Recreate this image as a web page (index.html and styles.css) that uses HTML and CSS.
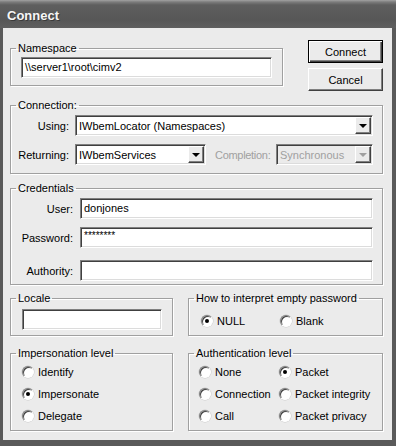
FILE: index.html
```html
<!DOCTYPE html>
<html lang="en">
<head>
    <meta charset="UTF-8">
    <meta name="viewport" content="width=device-width, initial-scale=1.0">
    <title>Connect</title>
    <link rel="stylesheet" href="styles.css">
</head>
<body>
    <div class="window">
        <div class="titlebar">Connect</div>
        <div class="client">
            <div class="top-row">
                <fieldset class="group namespace">
                    <legend>Namespace</legend>
                    <div class="group-body">
                        <div class="textbox">\\server1\root\cimv2</div>
                    </div>
                </fieldset>
                <div class="buttons">
                    <button class="btn btn-default">Connect</button>
                    <button class="btn">Cancel</button>
                </div>
            </div>

            <fieldset class="group connection">
                <legend>Connection:</legend>
                <div class="group-body">
                    <div class="field-row">
                        <span class="field-label">Using:</span>
                        <div class="combo combo-fill">
                            <span class="combo-text">IWbemLocator (Namespaces)</span>
                            <span class="combo-arrow"></span>
                        </div>
                    </div>
                    <div class="field-row">
                        <span class="field-label">Returning:</span>
                        <div class="combo combo-returning">
                            <span class="combo-text">IWbemServices</span>
                            <span class="combo-arrow"></span>
                        </div>
                        <span class="completion-label">Completion:</span>
                        <div class="combo combo-disabled">
                            <span class="combo-text">Synchronous</span>
                            <span class="combo-arrow"></span>
                        </div>
                    </div>
                </div>
            </fieldset>

            <fieldset class="group credentials">
                <legend>Credentials</legend>
                <div class="group-body">
                    <div class="field-row">
                        <span class="field-label">User:</span>
                        <div class="textbox">donjones</div>
                    </div>
                    <div class="field-row">
                        <span class="field-label">Password:</span>
                        <div class="textbox"><span class="masked">********</span></div>
                    </div>
                    <div class="field-row authority">
                        <span class="field-label">Authority:</span>
                        <div class="textbox"></div>
                    </div>
                </div>
            </fieldset>

            <div class="pair-row">
                <fieldset class="group locale">
                    <legend>Locale</legend>
                    <div class="group-body">
                        <div class="textbox"></div>
                    </div>
                </fieldset>
                <fieldset class="group empty-pw">
                    <legend>How to interpret empty password</legend>
                    <div class="group-body options">
                        <div class="option"><span class="radio checked"></span>NULL</div>
                        <div class="option"><span class="radio"></span>Blank</div>
                    </div>
                </fieldset>
            </div>

            <div class="pair-row lower">
                <fieldset class="group impersonation">
                    <legend>Impersonation level</legend>
                    <div class="group-body">
                        <div class="option"><span class="radio"></span>Identify</div>
                        <div class="option"><span class="radio checked"></span>Impersonate</div>
                        <div class="option"><span class="radio"></span>Delegate</div>
                    </div>
                </fieldset>
                <fieldset class="group authentication">
                    <legend>Authentication level</legend>
                    <div class="group-body options">
                        <div class="option"><span class="radio"></span>None</div>
                        <div class="option"><span class="radio checked"></span>Packet</div>
                        <div class="option"><span class="radio"></span>Connection</div>
                        <div class="option"><span class="radio"></span>Packet integrity</div>
                        <div class="option"><span class="radio"></span>Call</div>
                        <div class="option"><span class="radio"></span>Packet privacy</div>
                    </div>
                </fieldset>
            </div>
        </div>
    </div>
</body>
</html>
```

FILE: styles.css
```css
* {
    box-sizing: border-box;
}

body {
    margin: 0;
    background: #5a5a5a;
}

.window {
    width: 396px;
    height: 446px;
    display: flex;
    flex-direction: column;
    background: #5a5a5a;
    font-family: "Liberation Sans", Arial, sans-serif;
    font-size: 11px;
    color: #000;
}

/* title bar */
.titlebar {
    flex: none;
    height: 28px;
    padding: 4px 0 0 7px;
    line-height: 24px;
    font-size: 13px;
    font-weight: bold;
    color: #f6f6f6;
    text-shadow: 1px 1px 0 #3a3a3a;
    background: linear-gradient(to bottom, #a2a2a2 0px, #7c7c7c 2px, #5e5e5e 5px, #575757 20px, #5f5f5f 28px);
}

.client {
    flex: 1;
    margin: 0 4px 6px 3px;
    padding: 12px 9px 0 7px;
    background: #ebebeb;
}

/* group boxes */
.group {
    margin: 0;
    padding: 0;
    min-width: 0;
    border: 1px solid #a0a0a0;
    box-shadow: 1px 1px 0 #fff, inset 1px 1px 0 #fff;
}

.group legend {
    height: 14px;
    margin-left: 5px;
    padding: 0 2px;
    line-height: 14px;
    white-space: nowrap;
}

.top-row {
    display: flex;
    align-items: flex-start;
    justify-content: space-between;
}

.namespace {
    width: 273px;
    margin-top: 1px;
}

.namespace .group-body {
    padding: 2px 10px 7px 10px;
}

.buttons {
    display: flex;
    flex-direction: column;
    gap: 5px;
    width: 75px;
}

.btn {
    height: 23px;
    padding: 0;
    font-family: inherit;
    font-size: 11px;
    color: #000;
    background: #ebebeb;
    border: 1px solid;
    border-color: #fff #404040 #404040 #fff;
    box-shadow: inset -1px -1px 0 #808080;
}

.btn-default {
    border-color: #000;
    box-shadow: inset 1px 1px 0 #fff, inset -1px -1px 0 #404040, inset -2px -2px 0 #808080;
}

.connection {
    margin-top: 7px;
}

.connection .group-body {
    padding: 3px 9px 8px 0;
}

.field-row {
    display: flex;
    align-items: center;
}

.field-row + .field-row {
    margin-top: 8px;
}

.field-label {
    flex: none;
    width: 58px;
    margin-right: 6px;
    text-align: right;
    white-space: nowrap;
}

/* text boxes and combos */
.textbox {
    flex: 1;
    height: 21px;
    padding: 0 3px;
    line-height: 19px;
    white-space: nowrap;
    overflow: hidden;
    background: #fff;
    border: 1px solid;
    border-color: #808080 #fff #fff #808080;
    box-shadow: inset 1px 1px 0 #404040, inset -1px -1px 0 #dcdcdc;
}

.masked {
    display: inline-block;
    vertical-align: top;
    margin-top: 2px;
    font-size: 10px;
    line-height: 12px;
}

.combo {
    display: flex;
    align-items: center;
    height: 21px;
    padding: 1px;
    background: #fff;
    border: 1px solid;
    border-color: #808080 #fff #fff #808080;
    box-shadow: inset 1px 1px 0 #404040, inset -1px -1px 0 #dcdcdc;
}

.combo-fill {
    flex: 1;
}

.combo-returning {
    width: 131px;
}

.combo-text {
    flex: 1;
    padding-left: 2px;
    white-space: nowrap;
    overflow: hidden;
}

.combo-arrow {
    flex: none;
    width: 16px;
    height: 17px;
    display: flex;
    align-items: center;
    justify-content: center;
    background: #ebebeb;
    border: 1px solid;
    border-color: #fff #404040 #404040 #fff;
    box-shadow: inset -1px -1px 0 #808080;
}

.combo-arrow::after {
    content: "";
    margin-top: 1px;
    border-left: 4px solid transparent;
    border-right: 4px solid transparent;
    border-top: 4px solid #000;
}

.completion-label {
    margin-left: 9px;
    letter-spacing: -0.3px;
    color: #a0a0a0;
    white-space: nowrap;
}

.combo-disabled {
    width: 97px;
    margin-left: auto;
    background: #ebebeb;
    color: #a0a0a0;
}

.combo-disabled .combo-arrow::after {
    border-top-color: #a0a0a0;
}

.credentials {
    margin-top: 7px;
}

.credentials .group-body {
    padding: 3px 9px 3px 0;
}

.credentials .field-label {
    width: 62px;
    margin-right: 7px;
}

.credentials .field-row.authority {
    margin-top: 12px;
}

/* lower groups */
.pair-row {
    display: grid;
    grid-template-columns: 163px 195px;
    column-gap: 15px;
    margin-top: 6px;
}

.pair-row.lower {
    margin-top: 10px;
}

.locale .group-body {
    display: flex;
    padding: 4px 10px 5px 11px;
}

.options {
    display: grid;
    grid-template-columns: 80px auto;
}

.empty-pw .group-body {
    padding: 5px 0 3px 12px;
    grid-template-columns: 79px auto;
}

.impersonation .group-body {
    padding: 1px 0 3px 11px;
}

.authentication .group-body {
    padding: 1px 0 3px 10px;
}

.option {
    display: flex;
    align-items: center;
    height: 22px;
    white-space: nowrap;
}

.radio {
    position: relative;
    flex: none;
    width: 12px;
    height: 12px;
    margin-right: 4px;
    border-radius: 50%;
    background: #fff;
    border: 1px solid;
    border-color: #808080 #fff #fff #808080;
    box-shadow: inset 1px 1px 0 #404040, 0 0 0 0.5px #c8c8c8;
}

.radio.checked::after {
    content: "";
    position: absolute;
    left: 3px;
    top: 3px;
    width: 4px;
    height: 4px;
    border-radius: 50%;
    background: #000;
}
```
